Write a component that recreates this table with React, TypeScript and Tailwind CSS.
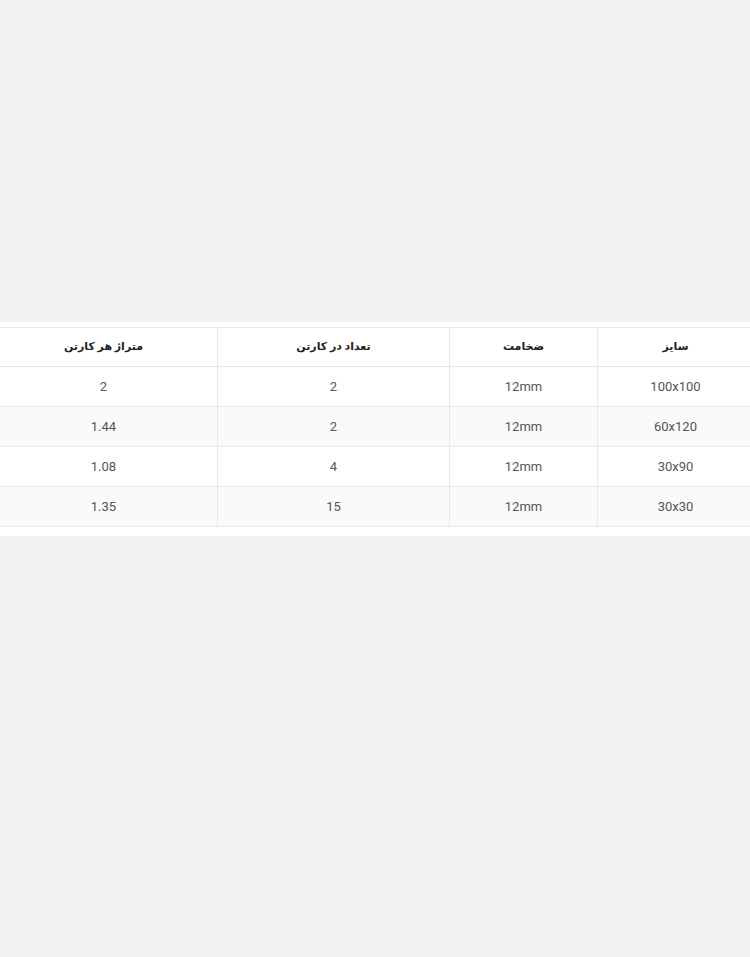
import React from 'react';

const HEADERS = ['سایز', 'ضخامت', 'تعداد در کارتن', 'متراژ هر کارتن'];

const ROWS = [
  ['100x100', '12mm', '2', '2'],
  ['60x120', '12mm', '2', '1.44'],
  ['30x90', '12mm', '4', '1.08'],
  ['30x30', '12mm', '15', '1.35'],
];

const COL_WIDTHS = ['w-[156px]', 'w-[148px]', 'w-[232px]', 'w-[228px]'];

export default function App() {
  return (
    <div
      className="min-h-[957px] w-full bg-[#f1f1f1] pt-[322px]"
      style={{ fontFamily: "Roboto, 'DejaVu Sans', sans-serif" }}
    >
      <div className="w-full overflow-hidden bg-white pt-[5px] pb-[9px]">
        <div dir="rtl" className="w-[764px] -ml-[10px]">
          <table className="w-[764px] table-fixed border-collapse">
            <thead>
              <tr className="h-[39px] border-y border-[#e8e8e8] shadow-[0_2px_3px_rgba(0,0,0,0.05)]">
                {HEADERS.map((h, i) => (
                  <th
                    key={h}
                    className={`${COL_WIDTHS[i]} border-x border-[#e8e8e8] text-center text-[11px] font-bold text-[#222]`}
                  >
                    {h}
                  </th>
                ))}
              </tr>
            </thead>
            <tbody>
              {ROWS.map((row, r) => (
                <tr
                  key={r}
                  className={`h-[40px] border-b border-[#e8e8e8] ${r % 2 === 1 ? 'bg-[#fafafa]' : 'bg-white'}`}
                >
                  {row.map((cell, c) => (
                    <td
                      key={c}
                      className="border-x border-[#e8e8e8] text-center text-[13px] text-[#555]"
                    >
                      {cell}
                    </td>
                  ))}
                </tr>
              ))}
            </tbody>
          </table>
        </div>
      </div>
    </div>
  );
}
